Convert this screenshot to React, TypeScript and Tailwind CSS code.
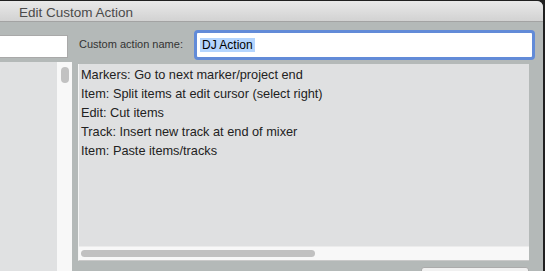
import React from 'react'

const actions = [
  'Markers: Go to next marker/project end',
  'Item: Split items at edit cursor (select right)',
  'Edit: Cut items',
  'Track: Insert new track at end of mixer',
  'Item: Paste items/tracks',
]

export default function App() {
  return (
    <div
      className="w-[545px] h-[271px] bg-[#202020] pt-px overflow-hidden"
      style={{ fontFamily: '"Liberation Sans", Arial, sans-serif' }}
    >
      <div className="w-[543px] h-[270px] bg-[#b4b9b8] rounded-tr-[6px] overflow-hidden flex flex-col">
        {/* Title bar */}
        <div className="h-[21px] shrink-0 bg-gradient-to-b from-[#e9e9e9] to-[#d2d2d2] border-b border-[#a3a3a3] flex items-center pl-[19px] pt-[3px]">
          <span className="text-[13.5px] text-[#4b4b4b] leading-none">Edit Custom Action</span>
        </div>

        {/* Body */}
        <div className="flex-1 flex gap-[6px] min-h-0">
          {/* Left column — filter + section list */}
          <div className="w-[72px] shrink-0 flex flex-col">
            <div className="h-[40px] shrink-0 pt-[13px]">
              <div className="w-[68px] h-[23px] bg-white border border-[#a9a9a9] border-l-0" />
            </div>
            <div className="flex-1 flex">
              <div className="w-[57px] bg-[#e0e1e2]" />
              <div className="w-[15px] bg-[#f8f8f8] pt-[5px] flex justify-center">
                <div className="w-[8px] h-[16px] rounded-full bg-[#c2c2c2]" />
              </div>
            </div>
          </div>

          {/* Right column */}
          <div className="w-[451px] shrink-0 flex flex-col">
            <div className="h-[41px] shrink-0 flex items-center pt-[4px]">
              <span className="text-[11px] text-[#333] w-[116px] shrink-0 pl-[1px]">Custom action name:</span>
              <div className="w-[341px] h-[30px] shrink-0 rounded-[4px] border-[3px] border-[#628bd8] bg-white flex items-center pl-[3px]">
                <span className="text-[12px] text-black bg-[#b4d5fe] px-[2px] leading-[14px]">DJ Action</span>
              </div>
            </div>

            {/* Action list */}
            <div className="h-[197px] shrink-0 flex flex-col border-l border-[#f4f4f4] border-b border-b-[#c9c9c9] bg-[#dfe0e1] mt-px">
              <div className="flex-1 pt-px">
                {actions.map((a) => (
                  <div key={a} className="h-[19px] flex items-center pl-[2px] text-[12.75px] text-[#222] whitespace-nowrap">
                    {a}
                  </div>
                ))}
              </div>
              <div className="h-[14px] shrink-0 bg-[#f8f8f8] flex items-center pl-[2px] border-t border-[#ececec]">
                <div className="w-[234px] h-[7px] rounded-full bg-[#c1c1c1]" />
              </div>
            </div>

            <div className="flex justify-end mt-[6px]">
              <div className="w-[108px] h-[10px] bg-[#f1f1f1] border border-[#ababab] rounded-t-[3px]" />
            </div>
          </div>
        </div>
      </div>
    </div>
  )
}
